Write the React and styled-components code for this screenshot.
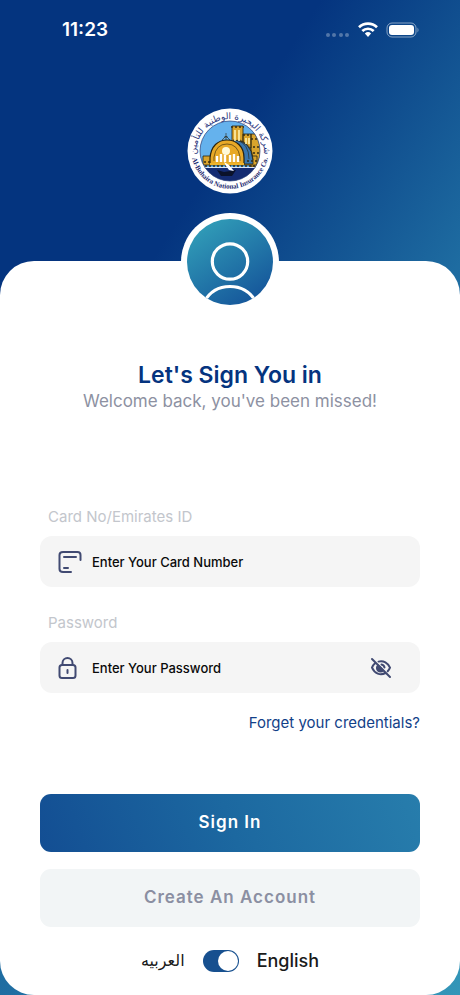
import React, { useState } from "react";
import styled, { createGlobalStyle } from "styled-components";

const GlobalStyle = createGlobalStyle`
  * { box-sizing: border-box; }
  body { margin: 0; font-family: "Inter", "Noto Sans", sans-serif; }
  button, input { font-family: inherit; }
`;

const Screen = styled.div`
  min-height: 100vh;
  display: flex;
  flex-direction: column;
  background: linear-gradient(123deg, #04347f 0%, #04347f 29%, #1e6ca1 57%, #3396b8 100%);
`;

const StatusBar = styled.header`
  display: flex;
  align-items: center;
  justify-content: space-between;
  padding: 18px 40px 18px 62px;
  color: #fff;
`;

const Time = styled.time`
  font-size: 19px;
  line-height: 24px;
  font-weight: 600;
`;

const StatusIcons = styled.div`
  display: flex;
  align-items: center;
  gap: 8px;
`;

const Brand = styled.div`
  display: flex;
  justify-content: center;
  padding: 48px 0 67px;
`;

const Sheet = styled.main`
  flex: 1;
  display: flex;
  flex-direction: column;
  align-items: center;
  padding: 0 40px 20px;
  background: #fff;
  border-radius: 34px;
`;

const Avatar = styled.div`
  display: flex;
  margin-top: -48px;
  padding: 6px;
  border-radius: 50%;
  background: #fff;
`;

const Title = styled.h1`
  margin: 48px 0 0;
  font-size: 23px;
  line-height: 32px;
  font-weight: 600;
  color: #05347f;
`;

const Subtitle = styled.p`
  margin: 0;
  font-size: 17px;
  line-height: 20px;
  color: #8d91a2;
`;

const Form = styled.form`
  align-self: stretch;
  display: flex;
  flex-direction: column;
  margin-top: 94px;
`;

const Label = styled.label`
  margin-left: 8px;
  padding-bottom: 7px;
  font-size: 15px;
  line-height: 24px;
  color: #c3c6cc;
`;

const Field = styled.div`
  display: flex;
  align-items: center;
  gap: 8px;
  height: 51px;
  margin-bottom: ${(p) => (p.$last ? 18 : 24)}px;
  padding: 0 27px 0 16px;
  border-radius: 12px;
  background: #f5f5f5;
`;

const Input = styled.input`
  flex: 1;
  min-width: 0;
  padding: 0;
  border: 0;
  outline: 0;
  background: none;
  font-size: 13px;
  font-weight: 500;
  color: #0a0a0a;
  &::placeholder { color: #0a0a0a; opacity: 1; }
`;

const IconButton = styled.button`
  display: flex;
  padding: 0;
  border: 0;
  background: none;
  cursor: pointer;
`;

const Link = styled.a`
  align-self: flex-end;
  font-size: 15px;
  line-height: 24px;
  color: #123f88;
  text-decoration: none;
`;

const Button = styled.button`
  height: 58px;
  margin-top: ${(p) => (p.$primary ? 59 : 17)}px;
  padding: 0 0 3px;
  border: 0;
  border-radius: 11px;
  background: ${(p) => (p.$primary ? "linear-gradient(70deg, #134e93, #1c68a0 50%, #277dac)" : "#f2f5f6")};
  color: ${(p) => (p.$primary ? "#fff" : "#8b8fa2")};
  font-size: 17px;
  font-weight: 600;
  letter-spacing: 1px;
  cursor: pointer;
`;

const LanguageRow = styled.div`
  display: flex;
  align-items: center;
  justify-content: center;
  gap: 18px;
  margin-top: 22px;
  color: #1a1a1a;
`;

const Language = styled.span`
  font-family: ${(p) => (p.$arabic ? '"DejaVu Sans", sans-serif' : "inherit")};
  font-size: ${(p) => (p.$arabic ? 16 : 18)}px;
  line-height: 24px;
  font-weight: ${(p) => (p.$arabic ? 400 : 500)};
`;

const Switch = styled.input`
  appearance: none;
  display: flex;
  align-items: center;
  width: 36px;
  height: 22px;
  margin: 0;
  padding: 1px;
  border-radius: 11px;
  background: #17508f;
  cursor: pointer;
  &::before {
    content: "";
    width: 20px;
    height: 20px;
    border-radius: 50%;
    background: #fff;
  }
  &:checked { justify-content: flex-end; }
`;

function Signal() {
  return (
    <svg width="24" height="18" viewBox="0 0 24 18" fill="#fff" opacity=".3" aria-hidden="true">
      {[2, 8, 15, 21].map((x) => <circle key={x} cx={x} cy="14" r="2" />)}
    </svg>
  );
}

function Wifi() {
  return (
    <svg width="20" height="16" viewBox="0 0 20 16" fill="none" stroke="#fff" strokeWidth="2.7" aria-hidden="true">
      <path d="M1 5.3a13 13 0 0 1 18 0" />
      <path d="M4.3 9a8.3 8.3 0 0 1 11.4 0" />
      <path d="M6.9 11.5a4.6 4.6 0 0 1 6.2 0L10 15z" fill="#fff" stroke="none" />
    </svg>
  );
}

function Battery() {
  return (
    <svg width="34" height="16" viewBox="0 0 34 16" aria-hidden="true">
      <rect x="1" y="1" width="29" height="14" rx="5" fill="none" stroke="#fff" opacity=".5" />
      <rect x="3" y="3" width="25" height="10" rx="3" fill="#fff" />
      <path d="M31.5 5.5q2 2.5 0 5z" fill="#fff" opacity=".5" />
    </svg>
  );
}

function Emblem() {
  return (
    <svg width="86" height="86" viewBox="0 0 86 86" role="img" aria-label="Al-Buhaira National Insurance Co.">
      <defs>
        <clipPath id="scene"><circle cx="43" cy="43" r="30" /></clipPath>
        <path id="top-arc" d="M9 45a34 34 0 0 1 68 0" />
        <path id="low-arc" d="M4.500 46a38.700 38.700 0 0 0 77 0" />
      </defs>
      <circle cx="43" cy="43" r="42.500" fill="#fff" />
      <g clipPath="url(#scene)">
        <path fill="#65b2ed" d="M12 12h62v48H12z" />
        <path fill="#142b72" d="M12 59h62v18H12z" />
        <g stroke="#29230f" strokeWidth=".8">
          <path fill="#d9a42d" d="M45 18h11v20H45zM56 26h8v14h-8zM64 26h10v33H64z" />
          <path fill="#d9a42d" d="M16 48h54v9H16z" />
          <path fill="#3976af" d="M46 32q18 0 20 20v4H55z" />
          <path fill="#e8a927" strokeWidth="1.200" d="M23 56v-6c1-12 8-18 17-18s17 6 17 18v6z" />
          <path fill="none" strokeWidth=".6" d="M27 53V49q2-13 13-13t13 13v4M39 32v-7M37 29h4M35 32l4-4 4 4M50 32q12 4 12 19M53 32q13 5 13 20" />
        </g>
        <path stroke="#fff3b0" strokeWidth="1.600" d="M48 22v11M52 22v11M59 30v6M62 30v6" />
        <path stroke="#352b13" strokeWidth="1.300" strokeDasharray="2 2" d="M44 19h13M56 27h8M64 31h10M66 39h9M66 45h10M60 53h14M13 54h10M14 58h60" />
        <path stroke="#fff" strokeWidth="2.400" d="M30 48v6M34 46v8M38 47v7M43 47v7M47 46v8M51 48v6" />
        <circle cx="39" cy="43" r="4" fill="#fff9d8" />
        <path fill="#f0b42b" d="M23 55h34v2H23z" />
        <path fill="#dce6f5" d="M14 59h60v1H14z" />
        <path fill="#0b122b" d="M30 62l7 2 12-2-4 6H34z" />
        <path fill="#fff" d="M37 54l5 3 5 6-5-1-3-4z" />
      </g>
      <circle cx="43" cy="43" r="30" fill="none" stroke="#263c77" strokeWidth=".7" />
      <text direction="rtl" fill="#28357c" fontFamily="DejaVu Sans" fontSize="9" textAnchor="middle">
        <textPath href="#top-arc" startOffset="50%">شركة البحيرة الوطنية للتأمين</textPath>
      </text>
      <text fill="#1b286e" fontFamily="Liberation Serif" fontWeight="700" fontSize="7" textAnchor="middle">
        <textPath href="#low-arc" startOffset="50%">Al-Buhaira National Insurance Co.</textPath>
      </text>
    </svg>
  );
}

function Person() {
  return (
    <svg width="86" height="86" viewBox="0 0 86 86" fill="none" aria-hidden="true">
      <defs>
        <linearGradient id="avatar-fill" x1=".15" y1=".1" x2=".75" y2="1">
          <stop stopColor="#309bb7" />
          <stop offset="1" stopColor="#15559a" />
        </linearGradient>
        <clipPath id="avatar-clip"><circle cx="43" cy="43" r="43" /></clipPath>
      </defs>
      <circle cx="43" cy="43" r="43" fill="url(#avatar-fill)" />
      <g clipPath="url(#avatar-clip)" stroke="#fff" strokeWidth="3.200">
        <circle cx="43" cy="42.500" r="17.700" />
        <path d="M17 83c5-9 14-15.500 26-15.500s21 6.500 26 15.500" />
      </g>
    </svg>
  );
}

function CardIcon() {
  return (
    <svg width="28" height="28" viewBox="0 0 28 28" fill="none" stroke="#414a72" strokeWidth="2" strokeLinecap="round" aria-hidden="true">
      <path d="M24.500 12V7q0-3-3-3H7Q3.500 4 3.500 7v14q0 3 3.500 3h8M8 9h12M8 20h4" />
    </svg>
  );
}

function LockIcon() {
  return (
    <svg width="28" height="28" viewBox="0 0 28 28" fill="none" stroke="#414a72" strokeWidth="2" strokeLinecap="round" aria-hidden="true">
      <rect x="3.500" y="11" width="16" height="13" rx="2.500" />
      <path d="M6.500 11V9a5 5 0 0 1 10 0v2M11.500 16v3" />
    </svg>
  );
}

function EyeOffIcon() {
  return (
    <svg width="24" height="24" viewBox="0 0 24 24" fill="none" stroke="#414a72" strokeWidth="2" strokeLinecap="round" aria-hidden="true">
      <path d="M3 3l18 18M9.500 5.600c5-1.400 9.500 1.400 11.500 6.100q-.8 2-2.300 3.600M6 7.200Q4 8.900 3 11.700c2.500 6 8.500 8 13.500 5.300" />
      <path d="M9 9.500a3.500 3.500 0 0 0 5 5z" fill="#414a72" />
      <path d="M12.500 8.500q2.500.5 3 3" />
    </svg>
  );
}

export default function App() {
  const [visible, setVisible] = useState(false);
  return (
    <>
      <GlobalStyle />
      <Screen>
        <StatusBar>
          <Time>11:23</Time>
          <StatusIcons><Signal /><Wifi /><Battery /></StatusIcons>
        </StatusBar>
        <Brand><Emblem /></Brand>
        <Sheet>
          <Avatar><Person /></Avatar>
          <Title>Let's Sign You in</Title>
          <Subtitle>Welcome back, you've been missed!</Subtitle>
          <Form onSubmit={(e) => e.preventDefault()}>
            <Label htmlFor="card">Card No/Emirates ID</Label>
            <Field>
              <CardIcon />
              <Input id="card" placeholder="Enter Your Card Number" />
            </Field>
            <Label htmlFor="password">Password</Label>
            <Field $last>
              <LockIcon />
              <Input id="password" type={visible ? "text" : "password"} placeholder="Enter Your Password" />
              <IconButton type="button" aria-label="Show password" onClick={() => setVisible(!visible)}>
                <EyeOffIcon />
              </IconButton>
            </Field>
            <Link href="#credentials">Forget your credentials?</Link>
            <Button type="submit" $primary>Sign In</Button>
            <Button type="button">Create An Account</Button>
          </Form>
          <LanguageRow>
            <Language $arabic lang="ar">العربيه</Language>
            <Switch type="checkbox" role="switch" aria-label="English" defaultChecked />
            <Language>English</Language>
          </LanguageRow>
        </Sheet>
      </Screen>
    </>
  );
}
